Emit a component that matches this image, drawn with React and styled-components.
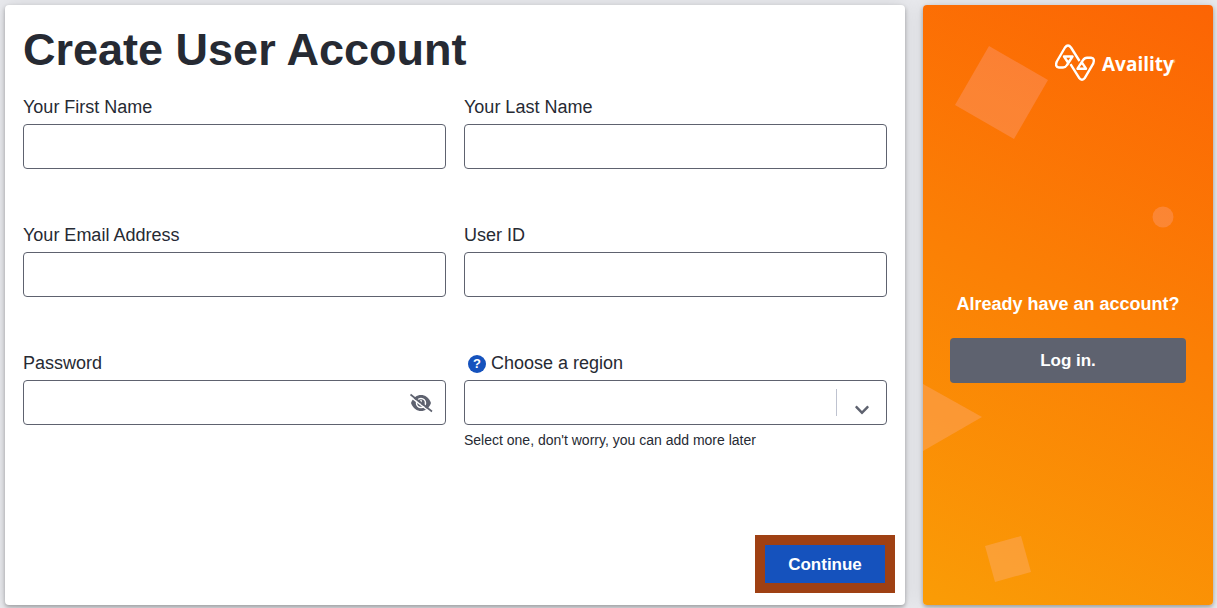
import styled, { createGlobalStyle } from 'styled-components'
import { FaChevronDown } from 'react-icons/fa'

const GlobalStyle = createGlobalStyle`
    * {
        box-sizing: border-box;
    }
    body {
        margin: 0;
        background-color: #e9eaee;
        color: #262a33;
        font-family: "Liberation Sans", Arial, sans-serif;
        font-size: 18px;
        line-height: 27px;
    }
`

const Page = styled.main`
    display: flex;
    gap: 18px;
    min-height: 100vh;
    padding: 5px 4px 3px 5px;
`

const Card = styled.section`
    border-radius: 4px;
    box-shadow: 0 2px 4px rgba(0, 0, 0, 0.3), 0 0 20px rgba(0, 0, 0, 0.1);
`

const FormCard = styled(Card)`
    flex: 1;
    padding: 18px;
    background-color: #fff;
`

const Title = styled.h1`
    margin: 0 0 16px;
    font-size: 45px;
    font-weight: 700;
    line-height: 54px;
`

const Form = styled.form`
    display: grid;
    grid-template-columns: 1fr 1fr;
    column-gap: 18px;
`

const Field = styled.div`
    display: flex;
    flex-direction: column;
    height: 128px;
`

const LabelRow = styled.div`
    display: flex;
    align-items: center;
    gap: 5px;
    margin-bottom: 2px;
    line-height: 29px;
`

const HelpButton = styled.button`
    width: 18px;
    height: 18px;
    margin-left: 4px;
    padding: 0;
    border: none;
    border-radius: 50%;
    background-color: #1552bd;
    color: #fff;
    font: inherit;
    font-size: 13px;
    font-weight: 700;
    line-height: 18px;
    cursor: pointer;
`

const Control = styled.div`
    display: flex;
    align-items: center;
    height: 45px;
    border: 1px solid #5e626f;
    border-radius: 4px;
    background-color: #fff;
    &:focus-within {
        border-color: #1552bd;
    }
    input, select {
        flex: 1;
        min-width: 0;
        height: 100%;
        padding: 0 12px;
        border: none;
        outline: none;
        background: none;
        color: inherit;
        font: inherit;
        appearance: none;
    }
`

const EyeButton = styled.button`
    display: flex;
    padding: 0 12px;
    border: none;
    background: none;
    cursor: pointer;
`

const Divider = styled.span`
    width: 1px;
    height: 27px;
    background-color: #bfc3d0;
`

const Arrow = styled.span`
    display: flex;
    justify-content: center;
    width: 49px;
    padding-top: 14px;
    color: #5e626f;
    font-size: 16px;
`

const HelpText = styled.small`
    margin-top: 5px;
    font-size: 14px;
    line-height: 21px;
`

const Actions = styled.div`
    grid-column: 1 / -1;
    display: flex;
    justify-content: flex-end;
    margin: 58px -8px -6px 0;
`

const Continue = styled.button`
    width: 140px;
    height: 58px;
    border: 10px solid #9f4013;
    background-color: #1552bd;
    color: #fff;
    font: inherit;
    font-size: 17px;
    font-weight: 700;
    cursor: pointer;
`

const LoginCard = styled(Card)`
    position: relative;
    display: flex;
    flex-direction: column;
    width: 290px;
    padding: 39px 27px;
    overflow: hidden;
    background: linear-gradient(205deg, #fc6404 0%, #fa9c06 100%);
    color: #fff;
`

const Shapes = styled.svg`
    position: absolute;
    top: 0;
    left: 0;
`

const LogoRow = styled.div`
    position: relative;
    display: flex;
    justify-content: flex-end;
    margin: 0 10px 207px 0;
`

const LoginTitle = styled.h2`
    position: relative;
    margin: 0 0 20px;
    font-size: 18px;
    line-height: 27px;
    text-align: center;
`

const LoginLink = styled.a`
    position: relative;
    height: 45px;
    border-radius: 4px;
    background-color: #5e626f;
    color: #fff;
    font-size: 17px;
    font-weight: 700;
    line-height: 45px;
    text-align: center;
    text-decoration: none;
`

function Logo() {
  return (
    <svg width="121" height="40" viewBox="0 0 121 40" role="img" aria-label="Availity">
        <g fill="none" stroke="#fff" strokeWidth="2.4" strokeLinejoin="round">
            <path d="M24.500 17L16 3.500Q13 -0.500 10 3.500L1.800 17.500Q-0.300 23 4 23.500H8Q10.500 23.500 12 21L17.500 12.500H9L13 18.500" />
            <path d="M15.500 20.200L24 33.700Q27 37.700 30 33.700L38.200 19.700Q40.300 14.200 36 13.700H32Q29.500 13.700 28 16.200L22.500 24.700H31L27 18.700" />
        </g>
        <text x="47" y="27" fill="#fff" fontFamily="'Open Sans', sans-serif" fontSize="19" fontWeight="700">Availity</text>
        <text x="117" y="19" fill="#fff" fontFamily="'Open Sans', sans-serif" fontSize="4">®</text>
    </svg>
  )
}

function EyeSlash() {
  return (
    <svg width="23" height="20" viewBox="0 0 23 20" aria-hidden="true">
        <path fill="#5e626f" d="M1 10C3 4.500 7 2 11 2S19 4.500 21 10C19 15.500 15 18 11 18S3 15.500 1 10Z" />
        <circle cx="11" cy="10" r="4.500" fill="#5e626f" stroke="#fff" strokeWidth="1.500" />
        <path d="M11 7V11" stroke="#fff" strokeWidth="1.500" />
        <path d="M0 3.500L22 20.500" stroke="#fff" strokeWidth="1.500" />
        <path d="M0.500 1.500L22 18.500" stroke="#5e626f" strokeWidth="1.600" />
    </svg>
  )
}

function TextField({ id, label, type = 'text' }) {
  return (
    <Field>
        <LabelRow>
            <label htmlFor={id}>{label}</label>
        </LabelRow>
        <Control>
            <input id={id} name={id} type={type} />
            {type === 'password' && (
                <EyeButton type="button" aria-label="Show password">
                    <EyeSlash />
                </EyeButton>
            )}
        </Control>
    </Field>
  )
}

function App() {
  return (
    <Page>
        <GlobalStyle />
        <FormCard>
            <Title>Create User Account</Title>
            <Form>
                <TextField id="firstName" label="Your First Name" />
                <TextField id="lastName" label="Your Last Name" />
                <TextField id="email" label="Your Email Address" type="email" />
                <TextField id="userId" label="User ID" />
                <TextField id="password" label="Password" type="password" />
                <Field>
                    <LabelRow>
                        <HelpButton type="button" aria-label="Help">?</HelpButton>
                        <label htmlFor="region">Choose a region</label>
                    </LabelRow>
                    <Control>
                        <select id="region" name="region" aria-describedby="regionHelp" />
                        <Divider />
                        <Arrow><FaChevronDown /></Arrow>
                    </Control>
                    <HelpText id="regionHelp">Select one, don't worry, you can add more later</HelpText>
                </Field>
                <Actions>
                    <Continue type="submit">Continue</Continue>
                </Actions>
            </Form>
        </FormCard>
        <LoginCard>
            <Shapes width="290" height="600" viewBox="0 0 290 600" fill="#ffc8f0" fillOpacity="0.2" aria-hidden="true">
                <path d="M66 41L125 75L91 134L32 100Z" />
                <circle cx="240" cy="212" r="10.500" />
                <path d="M0 379L59 412L0 446Z" />
                <path d="M62 541L98 531L108 567L72 577Z" />
            </Shapes>
            <LogoRow><Logo /></LogoRow>
            <LoginTitle>Already have an account?</LoginTitle>
            <LoginLink href="#login">Log in.</LoginLink>
        </LoginCard>
    </Page>
  )
}

export default App
